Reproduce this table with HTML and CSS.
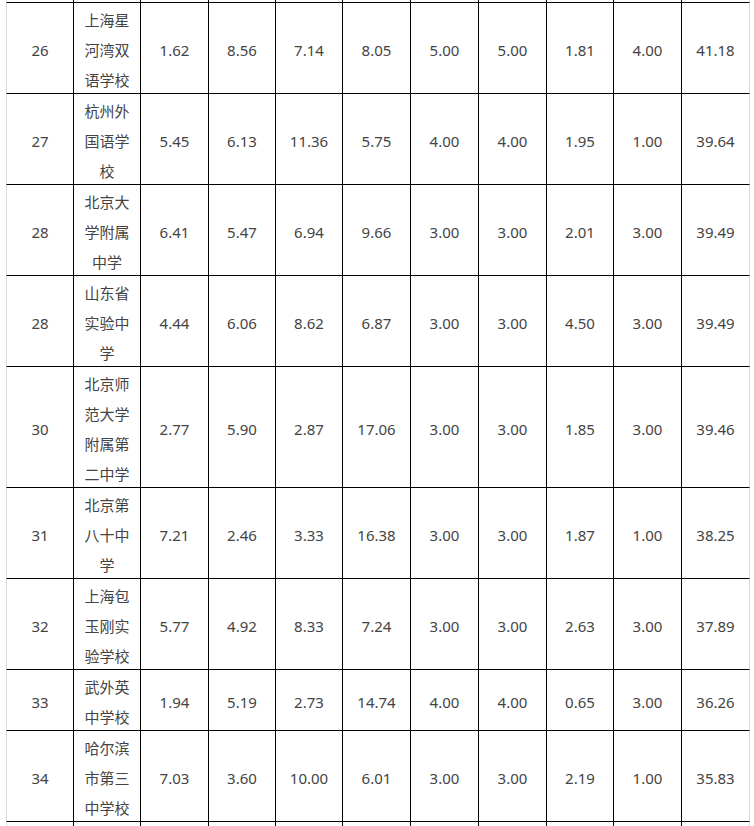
FILE: index.html
```html
<!DOCTYPE html>
<html lang="zh-CN">
<head>
<meta charset="utf-8">
<title>学校排名</title>
<link rel="stylesheet" href="styles.css">
</head>
<body>
<table class="rank">
  <colgroup>
    <col class="c68"><col class="c67"><col class="c68"><col class="c67"><col class="c67"><col class="c68">
    <col class="c68"><col class="c68"><col class="c67"><col class="c68"><col class="c68">
  </colgroup>
  <tbody>
    <tr class="cut"><td></td><td></td><td></td><td></td><td></td><td></td><td></td><td></td><td></td><td></td><td></td></tr>
    <tr><td><span class="v">26</span></td><td><span class="v">上海星河湾双语学校</span></td><td><span class="v">1.62</span></td><td><span class="v">8.56</span></td><td><span class="v">7.14</span></td><td><span class="v">8.05</span></td><td><span class="v">5.00</span></td><td><span class="v">5.00</span></td><td><span class="v">1.81</span></td><td><span class="v">4.00</span></td><td><span class="v">41.18</span></td></tr>
    <tr><td><span class="v">27</span></td><td><span class="v">杭州外国语学校</span></td><td><span class="v">5.45</span></td><td><span class="v">6.13</span></td><td><span class="v">11.36</span></td><td><span class="v">5.75</span></td><td><span class="v">4.00</span></td><td><span class="v">4.00</span></td><td><span class="v">1.95</span></td><td><span class="v">1.00</span></td><td><span class="v">39.64</span></td></tr>
    <tr><td><span class="v">28</span></td><td><span class="v">北京大学附属中学</span></td><td><span class="v">6.41</span></td><td><span class="v">5.47</span></td><td><span class="v">6.94</span></td><td><span class="v">9.66</span></td><td><span class="v">3.00</span></td><td><span class="v">3.00</span></td><td><span class="v">2.01</span></td><td><span class="v">3.00</span></td><td><span class="v">39.49</span></td></tr>
    <tr><td><span class="v">28</span></td><td><span class="v">山东省实验中学</span></td><td><span class="v">4.44</span></td><td><span class="v">6.06</span></td><td><span class="v">8.62</span></td><td><span class="v">6.87</span></td><td><span class="v">3.00</span></td><td><span class="v">3.00</span></td><td><span class="v">4.50</span></td><td><span class="v">3.00</span></td><td><span class="v">39.49</span></td></tr>
    <tr><td><span class="v">30</span></td><td><span class="v">北京师范大学附属第二中学</span></td><td><span class="v">2.77</span></td><td><span class="v">5.90</span></td><td><span class="v">2.87</span></td><td><span class="v">17.06</span></td><td><span class="v">3.00</span></td><td><span class="v">3.00</span></td><td><span class="v">1.85</span></td><td><span class="v">3.00</span></td><td><span class="v">39.46</span></td></tr>
    <tr><td><span class="v">31</span></td><td><span class="v">北京第八十中学</span></td><td><span class="v">7.21</span></td><td><span class="v">2.46</span></td><td><span class="v">3.33</span></td><td><span class="v">16.38</span></td><td><span class="v">3.00</span></td><td><span class="v">3.00</span></td><td><span class="v">1.87</span></td><td><span class="v">1.00</span></td><td><span class="v">38.25</span></td></tr>
    <tr><td><span class="v">32</span></td><td><span class="v">上海包玉刚实验学校</span></td><td><span class="v">5.77</span></td><td><span class="v">4.92</span></td><td><span class="v">8.33</span></td><td><span class="v">7.24</span></td><td><span class="v">3.00</span></td><td><span class="v">3.00</span></td><td><span class="v">2.63</span></td><td><span class="v">3.00</span></td><td><span class="v">37.89</span></td></tr>
    <tr><td><span class="v">33</span></td><td><span class="v">武外英中学校</span></td><td><span class="v">1.94</span></td><td><span class="v">5.19</span></td><td><span class="v">2.73</span></td><td><span class="v">14.74</span></td><td><span class="v">4.00</span></td><td><span class="v">4.00</span></td><td><span class="v">0.65</span></td><td><span class="v">3.00</span></td><td><span class="v">36.26</span></td></tr>
    <tr><td><span class="v">34</span></td><td><span class="v">哈尔滨市第三中学校</span></td><td><span class="v">7.03</span></td><td><span class="v">3.60</span></td><td><span class="v">10.00</span></td><td><span class="v">6.01</span></td><td><span class="v">3.00</span></td><td><span class="v">3.00</span></td><td><span class="v">2.19</span></td><td><span class="v">1.00</span></td><td><span class="v">35.83</span></td></tr>
    <tr class="cut"><td></td><td></td><td></td><td></td><td></td><td></td><td></td><td></td><td></td><td></td><td></td></tr>
  </tbody>
</table>
</body>
</html>
```

FILE: styles.css
```css
html, body {
  margin: 0;
  padding: 0;
  background: #ffffff;
}

body {
  font-family: "Noto Sans", "Noto Sans CJK SC", sans-serif;
  font-size: 15px;
  color: #444444;
  overflow: hidden;
}

.rank {
  table-layout: fixed;
  width: 744px;
  margin: -28px 0 0 6px;
  border-collapse: separate;
  border-spacing: 0;
}

.c68 { width: 68px; }
.c67 { width: 67px; }

.rank td {
  padding: 2px 5px 0;
  border-right: 1px solid #000000;
  border-bottom: 1px solid #000000;
  text-align: center;
  vertical-align: middle;
  line-height: 30px;
}

.rank td:first-child {
  border-left: 1px solid #dcdcdc;
}

.rank td:last-child {
  border-right-color: #dcdcdc;
}

.rank .cut td {
  padding: 0;
  height: 30px;
}

.v {
  display: block;
  margin-bottom: -2px;
}
```
